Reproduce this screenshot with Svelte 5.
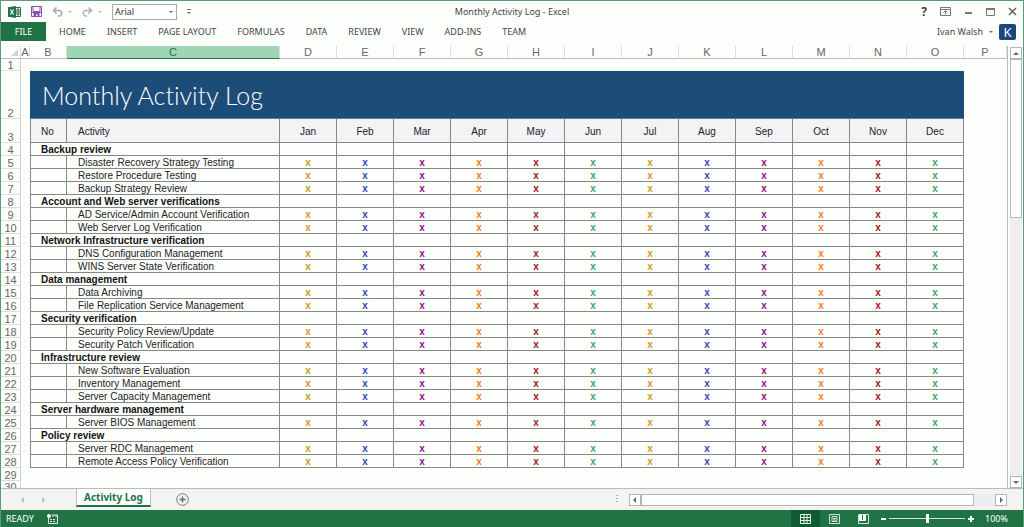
<script lang="ts">
  type Group = { title: string; items: string[] };

  const ribbonTabs = ["HOME", "INSERT", "PAGE LAYOUT", "FORMULAS", "DATA", "REVIEW", "VIEW", "ADD-INS", "TEAM"];
  const columns = "ABCDEFGHIJKLMNOP".split("");
  const months = ["Jan", "Feb", "Mar", "Apr", "May", "Jun", "Jul", "Aug", "Sep", "Oct", "Nov", "Dec"];
  const markColors = ["gold", "blue", "purple", "orange", "red", "green"];

  const groups: Group[] = [
    {
      title: "Backup review",
      items: ["Disaster Recovery Strategy Testing", "Restore Procedure Testing", "Backup Strategy Review"],
    },
    {
      title: "Account and Web server verifications",
      items: ["AD Service/Admin Account Verification", "Web Server Log Verification"],
    },
    {
      title: "Network Infrastructure verification",
      items: ["DNS Configuration Management", "WINS Server State Verification"],
    },
    { title: "Data management", items: ["Data Archiving", "File Replication Service Management"] },
    { title: "Security verification", items: ["Security Policy Review/Update", "Security Patch Verification"] },
    {
      title: "Infrastructure review",
      items: ["New Software Evaluation", "Inventory Management", "Server Capacity Management"],
    },
    { title: "Server hardware management", items: ["Server BIOS Management"] },
    { title: "Policy review", items: ["Server RDC Management", "Remote Access Policy Verification"] },
  ];

  // sheet rows 4 and up
  const rows = groups
    .flatMap((g) => [{ text: g.title, heading: true }, ...g.items.map((text) => ({ text, heading: false }))])
    .map((row, i) => ({ ...row, num: i + 4 }));

  let selected = $state("C");
  let font = $state("Arial");
  let zoom = $state(100);
</script>

<div class="window">
  <header class="titlebar">
    <div class="quick">
      <svg width="13" height="12" viewBox="0 0 13 12" aria-label="Excel">
        <path d="M7 1.5h5.500v9H7z" fill="#fff" stroke="#217346" />
        <path d="M8 4h4M8 6h4M8 8h4M10 2v8" stroke="#217346" />
        <path d="M0 1.300L8 0v12L0 10.700z" fill="#217346" />
        <path d="M2.300 3.500l3.400 5M5.700 3.500l-3.400 5" stroke="#fff" stroke-width="1.200" />
      </svg>
      <button aria-label="Save">
        <svg width="11" height="11" viewBox="0 0 11 11">
          <path d="M.5.5h10v10H.5z" fill="#fff" stroke="#8b4fb0" />
          <path d="M2 1v4.500h7V1" fill="none" stroke="#8b4fb0" />
          <path d="M1 6h9v1H1zM2.500 7h6v3.500h-2V8.500H5v2H2.500z" fill="#8b4fb0" />
        </svg>
      </button>
      <button class="arrowed" aria-label="Undo">
        <svg width="11" height="10" viewBox="0 0 11 10">
          <path d="M1.500 3.500H7a2.500 2.500 0 010 5.500H6M4.500.5l-3 3 3 3" fill="none" stroke="#a8a8a8" stroke-width="1.600" />
        </svg>
        <span class="down light"></span>
      </button>
      <button class="arrowed" aria-label="Redo">
        <svg width="11" height="10" viewBox="0 0 11 10">
          <path d="M9.500 3.500H4a2.500 2.500 0 000 5.500h1M6.500.5l3 3-3 3" fill="none" stroke="#b4b4b4" stroke-width="1.600" />
        </svg>
        <span class="down light"></span>
      </button>
      <div class="fontbox">
        <select aria-label="Font" bind:value={font}>
          <option>Arial</option>
          <option>Calibri</option>
        </select>
        <span class="down"></span>
      </div>
      <button class="customize" aria-label="Customize toolbar">
        <i></i>
        <span class="down"></span>
      </button>
    </div>
    <h1>Monthly Activity Log - Excel</h1>
    <div class="controls">
      <button aria-label="Help"><b>?</b></button>
      <button aria-label="Ribbon display options">
        <svg width="11" height="9" viewBox="0 0 11 9">
          <path d="M.5.5h10v8H.5zM1 2.500h9" fill="none" stroke="#777" />
          <path d="M5.500 7.500V4M3.500 5.500l2-2 2 2" fill="none" stroke="#777" />
        </svg>
      </button>
      <button aria-label="Minimize">
        <svg width="9" height="9" viewBox="0 0 9 9"><path d="M1 5h7v2H1z" fill="#777" /></svg>
      </button>
      <button aria-label="Maximize">
        <svg width="9" height="9" viewBox="0 0 9 9">
          <path d="M.5 1v7.500h8V1" fill="none" stroke="#777" />
          <path d="M0 1h9v2H0z" fill="#777" />
        </svg>
      </button>
      <button aria-label="Close">
        <svg width="9" height="9" viewBox="0 0 9 9"><path d="M1 1l7 7M8 1L1 8" stroke="#666" stroke-width="1.600" /></svg>
      </button>
    </div>
  </header>

  <nav class="ribbon">
    <button class="file">FILE</button>
    <div class="tabs">
      {#each ribbonTabs as tab}
        <button>{tab}</button>
      {/each}
    </div>
    <button class="account">
      Ivan Walsh
      <span class="down"></span>
      <span class="avatar">K</span>
    </button>
  </nav>

  <main>
    <div class="sheet">
      <table>
        <colgroup>
          <col class="w-num" />
          <col class="w-a" />
          <col class="w-b" />
          <col class="w-c" />
          {#each months as month (month)}
            <col class="w-month" />
          {/each}
          <col />
        </colgroup>
        <thead>
          <tr>
            <th class="corner"><svg width="7" height="7" viewBox="0 0 7 7"><path d="M7 0v7H0z" fill="#d4d4d4" /></svg></th>
            {#each columns as col (col)}
              <th class:selected={selected === col} onclick={() => (selected = col)}>{col}</th>
            {/each}
          </tr>
        </thead>
        <tbody>
          <tr class="short"><th>1</th><td colspan="16"></td></tr>
          <tr class="banner">
            <th>2</th>
            <td></td>
            <td class="title" colspan="14">Monthly Activity Log</td>
            <td></td>
          </tr>
          <tr class="labels">
            <th>3</th>
            <td></td>
            <td class="cell first heading">No</td>
            <td class="cell name">Activity</td>
            {#each months as month (month)}
              <td class="cell mark">{month}</td>
            {/each}
            <td></td>
          </tr>
          {#each rows as row (row.num)}
            <tr>
              <th>{row.num}</th>
              <td></td>
              {#if row.heading}
                <td class="cell first heading" colspan="2">{row.text}</td>
              {:else}
                <td class="cell first"></td>
                <td class="cell name">{row.text}</td>
              {/if}
              {#each months as month, i (month)}
                <td class="cell mark {markColors[i % 6]}">{row.heading ? "" : "x"}</td>
              {/each}
              <td></td>
            </tr>
          {/each}
          <tr><th>29</th><td colspan="16"></td></tr>
          <tr class="short"><th>30</th><td colspan="16"></td></tr>
        </tbody>
      </table>
    </div>
    <div class="vscroll">
      <button aria-label="Scroll up"><span class="up"></span></button>
      <div class="thumb"></div>
      <div class="track"></div>
      <button aria-label="Scroll down"><span class="down"></span></button>
    </div>
  </main>

  <div class="sheetbar">
    <div class="steps">
      <button aria-label="Previous sheet"><span class="left light"></span></button>
      <button aria-label="Next sheet"><span class="right light"></span></button>
    </div>
    <button class="sheet-tab">Activity Log</button>
    <button class="add" aria-label="New sheet">
      <svg width="13" height="13" viewBox="0 0 13 13">
        <circle cx="6.500" cy="6.500" r="5.800" fill="none" stroke="#777" />
        <path d="M6.500 3.500v6M3.500 6.500h6" stroke="#666" stroke-width="1.400" />
      </svg>
    </button>
    <svg class="grip" width="2" height="9" viewBox="0 0 2 9"><path d="M1 0v9" stroke="#aaa" stroke-dasharray="1 2" stroke-width="2" /></svg>
    <div class="hscroll">
      <button aria-label="Scroll left"><span class="left"></span></button>
      <div class="thumb"></div>
      <div class="track"></div>
      <button aria-label="Scroll right"><span class="right"></span></button>
    </div>
  </div>

  <footer>
    <span>READY</span>
    <svg class="macro" width="11" height="10" viewBox="0 0 11 10">
      <path d="M1.500 4v5.500h9V1H5" fill="none" stroke="#dcebe2" />
      <path d="M5 2h5M3 5.500h6M3 7.500h6" stroke="#dcebe2" stroke-dasharray="2 1" />
      <circle cx="2" cy="2" r="2" fill="#fff" />
    </svg>
    <div class="views">
      <button class="active" aria-label="Normal view">
        <svg width="11" height="10" viewBox="0 0 11 10">
          <path d="M.5.5h10v9H.5zM.5 3.500h10M.5 6.500h10M4 .5v9M7 .5v9" fill="none" stroke="#e6f1ea" />
        </svg>
      </button>
      <button aria-label="Page layout view">
        <svg width="11" height="10" viewBox="0 0 11 10">
          <path d="M.5.5h10v9H.5zM3 2.500h5v5H3zM4 4.500h3M4 6h3" fill="none" stroke="#cfe3d7" />
        </svg>
      </button>
      <button aria-label="Page break preview">
        <svg width="11" height="10" viewBox="0 0 11 10">
          <path d="M.5.5h10v9H.5z" fill="none" stroke="#cfe3d7" />
          <path d="M1 1h3v5H1zM5 1h2v5H5z" fill="#fff" />
          <path d="M1 6.500h6.500V1" fill="none" stroke="#fff" />
        </svg>
      </button>
    </div>
    <button class="zoom-step" aria-label="Zoom out" onclick={() => (zoom -= 10)}>
      <svg width="5" height="6" viewBox="0 0 5 6"><path d="M0 2h5v2H0z" fill="#fff" /></svg>
    </button>
    <input type="range" aria-label="Zoom" min="0" max="200" bind:value={zoom} />
    <button class="zoom-step" aria-label="Zoom in" onclick={() => (zoom += 10)}>
      <svg width="6" height="6" viewBox="0 0 6 6"><path d="M0 3h6M3 0v6" stroke="#fff" stroke-width="2" /></svg>
    </button>
    <span class="percent">{zoom}%</span>
  </footer>
</div>

<style>
  :global(body) {
    margin: 0;
  }

  .window {
    box-sizing: border-box;
    height: 100vh;
    display: flex;
    flex-direction: column;
    border: 1px solid #5c9a76;
    border-bottom: none;
    background: #fdfffd;
    color: #444;
    font-family: "Segoe UI", "Noto Sans", sans-serif;
    font-size: 9px;
    overflow: hidden;
  }

  button {
    display: flex;
    align-items: center;
    justify-content: center;
    padding: 0;
    border: none;
    background: none;
    color: inherit;
    font: inherit;
  }

  svg {
    display: block;
    flex: none;
  }

  /* small triangles */
  .down,
  .up,
  .left,
  .right {
    flex: none;
    border: 3px solid transparent;
    color: #666;
  }

  .down {
    border-top-color: currentColor;
    border-bottom: none;
  }

  .up {
    border-bottom-color: currentColor;
    border-top: none;
  }

  .left {
    border-right-color: currentColor;
    border-left: none;
  }

  .right {
    border-left-color: currentColor;
    border-right: none;
  }

  .light {
    color: #bbb;
  }

  .quick .down,
  .account .down {
    border-width: 2px;
    border-bottom: none;
  }

  .titlebar {
    flex: none;
    height: 21px;
    display: grid;
    grid-template-columns: 1fr auto 1fr;
    align-items: center;
  }

  .quick {
    display: flex;
    align-items: center;
    padding-left: 7px;
    gap: 10px;
  }

  .arrowed {
    gap: 5px;
  }

  .fontbox {
    display: flex;
    align-items: center;
    position: relative;

    select {
      box-sizing: border-box;
      width: 65px;
      height: 16px;
      padding: 0 2px;
      appearance: none;
      border: 1px solid #aaa;
      border-radius: 0;
      background: #fff;
      color: #333;
      font: inherit;
      line-height: 14px;
    }

    .down {
      position: absolute;
      right: 4px;
      pointer-events: none;
    }
  }

  .customize {
    flex-direction: column;
    gap: 2px;

    i {
      width: 4px;
      height: 1px;
      background: #777;
    }
  }

  h1 {
    margin: 0;
    font-size: 9px;
    font-weight: normal;
  }

  .controls {
    display: flex;
    justify-content: flex-end;
    align-items: center;
    gap: 13px;
    padding-right: 6px;

    b {
      font-size: 12px;
      line-height: 12px;
    }
  }

  .ribbon {
    flex: none;
    height: 19px;
    display: flex;
    align-items: stretch;
  }

  .file {
    width: 45px;
    background: #217346;
    color: #fff;
  }

  .tabs {
    flex: 1;
    display: flex;
    gap: 21px;
    padding-left: 13px;
  }

  .account {
    gap: 6px;
    padding-right: 7px;
  }

  .avatar {
    width: 17px;
    height: 16px;
    border-radius: 2px;
    background: #17497b;
    color: #fff;
    font-size: 13px;
    line-height: 16px;
    text-align: center;
  }

  main {
    flex: 1;
    min-height: 0;
    display: flex;
    gap: 2px;
    padding: 5px 1px 0 0;
  }

  .sheet {
    flex: 1;
    overflow: hidden;
    border-right: 1px solid #bbb;
  }

  table {
    width: 100%;
    table-layout: fixed;
    border-spacing: 0;
    color: #222;
    font-family: Arial, "Liberation Sans", sans-serif;
    font-size: 10px;
    line-height: 10px;
  }

  .w-num {
    width: 20px;
  }

  .w-a {
    width: 9px;
  }

  .w-b {
    width: 37px;
  }

  .w-c {
    width: 213px;
  }

  .w-month {
    width: 57px;
  }

  th,
  td {
    box-sizing: border-box;
    height: 13px;
    padding: 2px 0 0;
    white-space: nowrap;
  }

  th {
    border-right: 1px solid #d0d0d0;
    border-bottom: 1px solid #ddd;
    color: #666;
    font-size: 11px;
    font-weight: normal;
    vertical-align: bottom;
  }

  thead th {
    padding: 1px 0;
    border-right-color: #ddd;
    border-bottom-color: #bbb;
  }

  thead .selected {
    border-bottom-color: #217346;
    background: #9fd5b7;
    color: #217346;
  }

  .corner svg {
    margin: 0 2px 1px auto;
  }

  .short th,
  .short td {
    height: 12px;
    padding-top: 1px;
  }

  .banner th {
    height: 48px;
  }

  .title {
    padding: 0 0 0 12px;
    border-bottom: 1px solid #5c7b9c;
    background: #1c4c78;
    color: #fff;
    font-family: "Century Gothic", Lato, sans-serif;
    font-size: 25px;
    font-weight: 300;
    font-variant-ligatures: none;
    line-height: 32px;
  }

  .labels th {
    height: 24px;
  }

  .cell {
    border-right: 1px solid #888;
    border-bottom: 1px solid #888;
  }

  .first {
    border-left: 1px solid #888;
  }

  .name {
    padding-left: 11px;
  }

  .heading {
    padding-left: 10px;
    color: #111;
    font-weight: bold;
  }

  .mark {
    font-weight: bold;
    text-align: center;
  }

  .labels .cell {
    background: #f3f3f6;
    color: #222;
    font-weight: normal;
  }

  .gold {
    color: #d09a1c;
  }

  .blue {
    color: #3c46b4;
  }

  .purple {
    color: #8f128f;
  }

  .orange {
    color: #f57c20;
  }

  .red {
    color: #a01818;
  }

  .green {
    color: #3fa374;
  }

  .vscroll,
  .hscroll {
    display: flex;

    button,
    .thumb {
      box-sizing: border-box;
      border: 1px solid #b5b5b5;
      background: #fff;
    }

    .track {
      flex: 1;
      background: #efedf1;
    }
  }

  .vscroll {
    flex-direction: column;
    width: 12px;
    padding-top: 1px;

    button {
      height: 12px;
    }

    .thumb {
      height: 36%;
    }
  }

  .sheetbar {
    flex: none;
    height: 21px;
    display: flex;
    align-items: center;
    border-top: 1px solid #bbb;
    background: #f3f3f4;
  }

  .steps {
    display: flex;
    gap: 18px;
    padding: 0 31px 0 20px;
  }

  .sheet-tab {
    align-self: flex-start;
    height: 18px;
    padding: 0 7px;
    border: 1px solid #bbb;
    border-top: none;
    border-bottom: 2px solid #217346;
    background: #fff;
    color: #217346;
    font-size: 10px;
    font-weight: bold;
  }

  .add {
    margin-left: 25px;
  }

  .grip {
    margin-left: auto;
    margin-right: 11px;
  }

  .hscroll {
    width: 37%;
    height: 12px;
    margin-right: 16px;

    button {
      width: 12px;
    }

    .thumb {
      width: 88%;
    }
  }

  footer {
    flex: none;
    height: 17px;
    display: flex;
    align-items: center;
    padding: 0 15px 0 5px;
    background: #217346;
    color: #fff;
  }

  .macro {
    margin-left: 13px;
  }

  .views {
    display: flex;
    align-self: stretch;
    margin-left: auto;
    margin-right: 3px;

    button {
      width: 29px;
    }

    .active {
      background: #0f5a30;
    }
  }

  input[type="range"] {
    width: 76px;
    height: 9px;
    margin: 0 3px;
    appearance: none;
    background: linear-gradient(#cfe3d7, #cfe3d7) center / 100% 1px no-repeat;
  }

  input[type="range"]::-webkit-slider-thumb {
    appearance: none;
    width: 3px;
    height: 9px;
    background: #fff;
  }

  .percent {
    margin-left: 11px;
  }
</style>
